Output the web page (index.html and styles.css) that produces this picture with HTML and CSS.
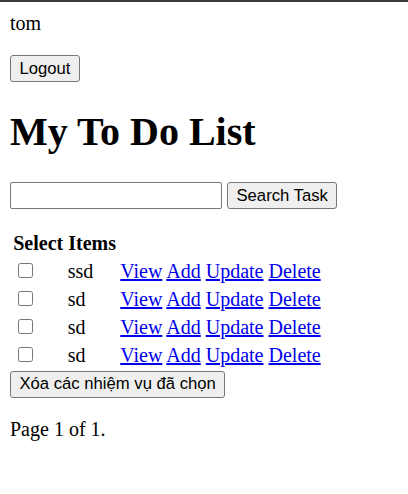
FILE: index.html
```html
<!DOCTYPE html>
<html>
<head>
<meta charset="utf-8">
<link rel="stylesheet" href="styles.css">
</head>
<body>
<div class="user">tom</div>
<p class="logout-row"><button class="btn btn-logout">Logout</button></p>
<h1 class="title">My To Do List</h1>
<form class="search"><input class="search-input" type="text"> <button class="btn btn-search" type="button">Search Task</button></form>
<form class="list-form">
<table class="tasks">
<tr><th class="head" colspan="3">Select Items</th></tr>
<tr><td class="c-check"><input type="checkbox" class="cb"></td><td class="c-name">ssd</td><td class="c-actions"><a href="#">View</a> <a href="#">Add</a> <a href="#">Update</a> <a href="#">Delete</a></td></tr>
<tr><td class="c-check"><input type="checkbox" class="cb"></td><td class="c-name">sd</td><td class="c-actions"><a href="#">View</a> <a href="#">Add</a> <a href="#">Update</a> <a href="#">Delete</a></td></tr>
<tr><td class="c-check"><input type="checkbox" class="cb"></td><td class="c-name">sd</td><td class="c-actions"><a href="#">View</a> <a href="#">Add</a> <a href="#">Update</a> <a href="#">Delete</a></td></tr>
<tr><td class="c-check"><input type="checkbox" class="cb"></td><td class="c-name">sd</td><td class="c-actions"><a href="#">View</a> <a href="#">Add</a> <a href="#">Update</a> <a href="#">Delete</a></td></tr>
</table>
<button class="btn btn-delete" type="button">Xóa các nhiệm vụ đã chọn</button>
</form>
<p class="pager">Page 1 of 1.</p>
</body>
</html>
```
FILE: styles.css
```css
html {
  border-top: 2px solid #3a3a3a;
  background: #fff;
}
body {
  margin: 10px;
  font-family: "Liberation Serif", "Times New Roman", serif;
  font-size: 20px;
  color: #000;
}
.user {
  line-height: normal;
}
.logout-row {
  margin: 20px 0;
}
.btn {
  font-family: "Liberation Sans", Arial, sans-serif;
  font-size: 16.67px;
  color: #000;
  background: #efefef;
  border: 1.25px solid #767676;
  border-radius: 3px;
  padding: 0 8.5px;
  height: 27px;
  line-height: 24px;
  vertical-align: baseline;
  margin: 0;
}
.title {
  font-size: 40px;
  font-weight: bold;
  margin: 27px 0;
  line-height: 46px;
}
.search {
  margin: 0 0 20px;
}
.search-input {
  width: 212px;
  height: 27px;
  box-sizing: border-box;
  border: 1.25px solid #767676;
  border-radius: 2px;
  padding: 1px 2px;
  font-size: 16.67px;
  margin: 0;
  vertical-align: baseline;
}
.list-form {
  margin: 0;
}
.tasks {
  border-spacing: 2.5px;
  border-collapse: separate;
  margin-left: 0;
}
.tasks td, .tasks th {
  padding: 1.25px;
}
.tasks td {
  height: 23.5px;
  line-height: 23.5px;
}
.head {
  text-align: left;
  font-weight: bold;
}
.c-check {
  width: 50px;
}
.c-name {
  width: 48px;
}
.cb {
  width: 15px;
  height: 15px;
  margin: 0 3.75px 0 5px;
  vertical-align: 0;
}
.c-actions a {
  color: #0000ee;
  text-decoration: underline;
}
.pager {
  margin: 20px 0;
}
```
